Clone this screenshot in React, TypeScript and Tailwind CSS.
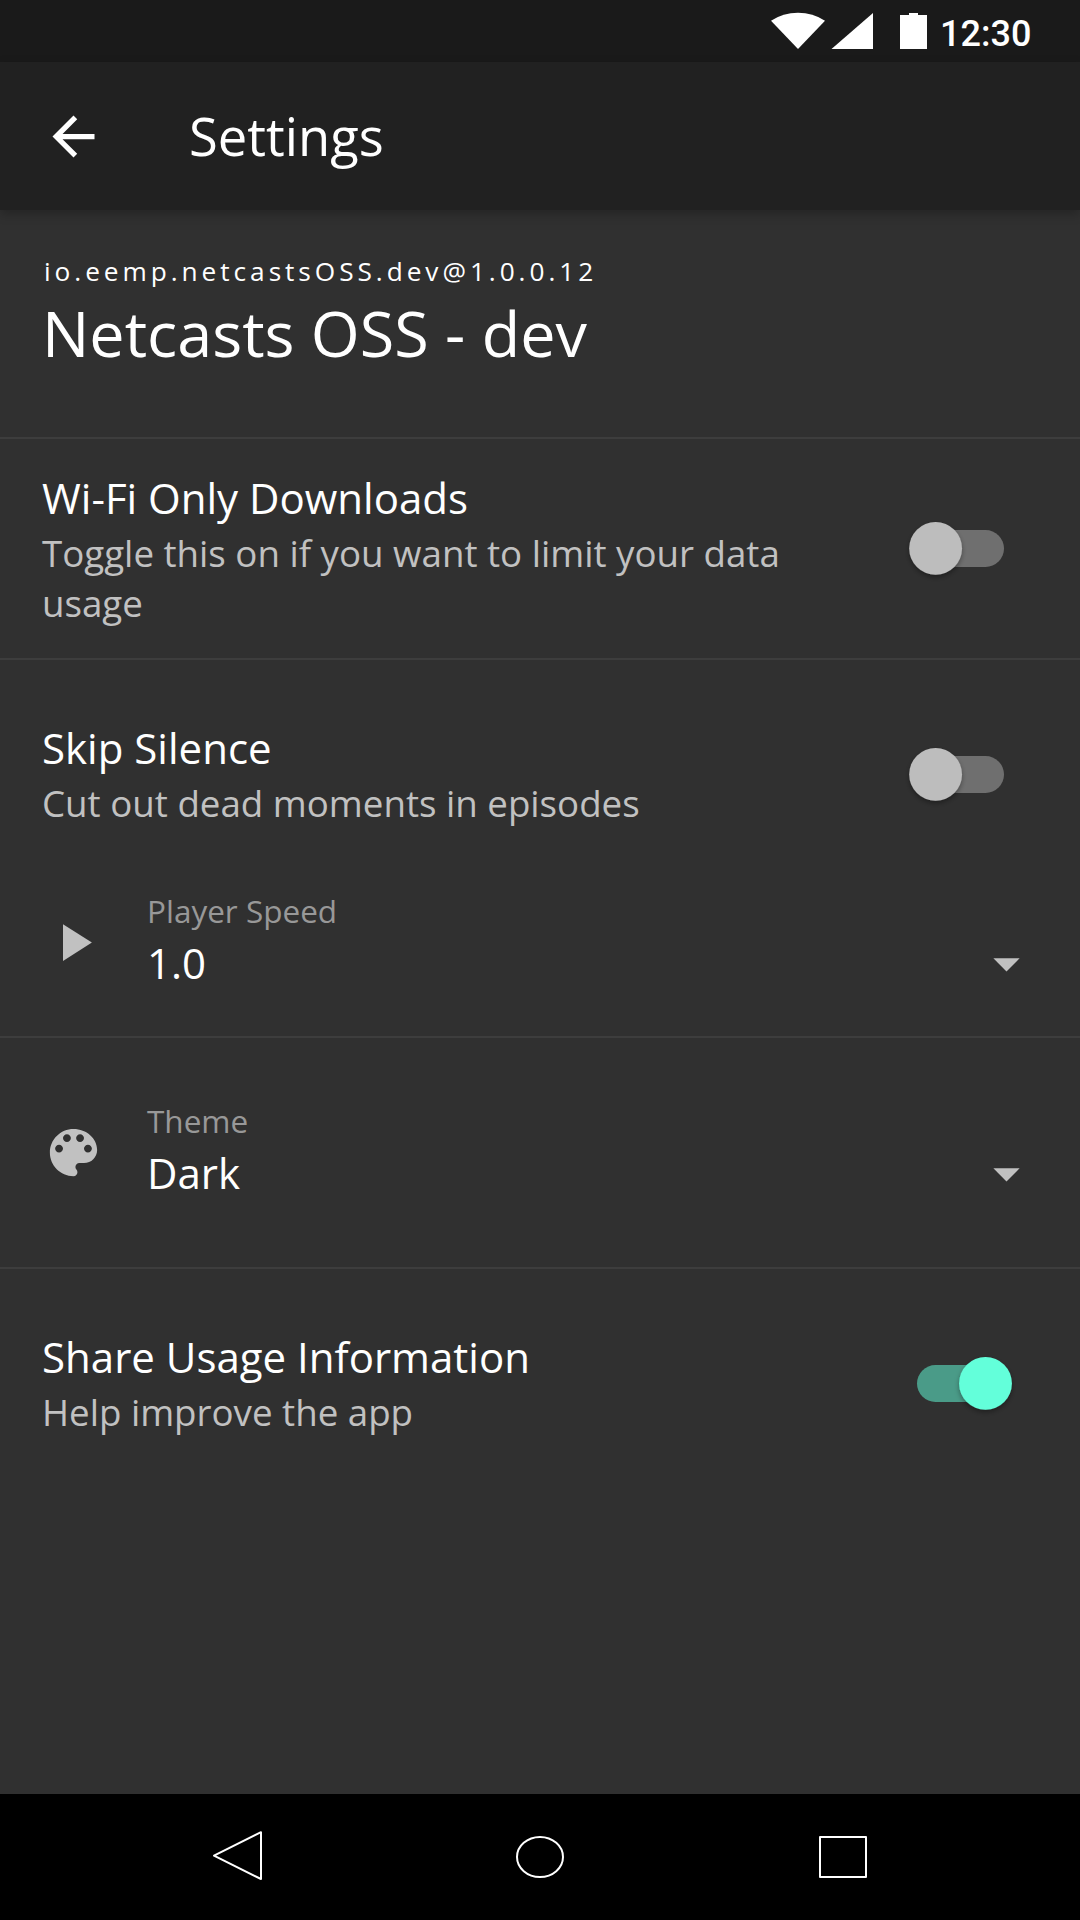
import React from "react";

function Toggle({ on = false }: { on?: boolean }) {
  return (
    <svg width="112" height="64" viewBox="0 0 112 64" className="shrink-0">
      <defs>
        <filter id="knob" x="-30%" y="-30%" width="160%" height="170%">
          <feDropShadow dx="0" dy="2.5" stdDeviation="2.5" floodColor="#000" floodOpacity="0.35" />
        </filter>
      </defs>
      <rect x={on ? 12 : 11} y="12" width="88" height="37" rx="18.5" fill={on ? "#4a9b88" : "#6f6f6f"} />
      <circle cx={on ? 80.5 : 30.6} cy="30.4" r="26.4" fill={on ? "#64ffda" : "#bdbdbd"} filter="url(#knob)" />
    </svg>
  );
}

function SwitchText({ title, text }: { title: string; text: string }) {
  return (
    <div className="w-[760px]">
      <div className="text-[42px] leading-[60px] text-white">{title}</div>
      <div className="text-[36.7px] leading-[50px] text-[#c1c1c1]">{text}</div>
    </div>
  );
}

function SelectRow({ icon, label, value }: { icon: React.ReactNode; label: string; value: string }) {
  return (
    <div className="flex items-start pl-[42px]">
      <div className="mt-[21px] h-[63px] w-[105px]">{icon}</div>
      <div className="flex-1">
        <div className="text-[31.5px] leading-[42px] text-[#989898]">{label}</div>
        <div className="mt-px text-[42px] leading-[60px] text-white">{value}</div>
      </div>
      <svg width="63" height="63" viewBox="0 0 24 24" fill="#c1c1c1" className="mt-[42px] mr-[42px]">
        <path d="M7 10l5 5 5-5z" />
      </svg>
    </div>
  );
}

export default function App() {
  return (
    <div className="flex h-[1920px] w-[1080px] flex-col overflow-hidden bg-[#303030] font-['Open_Sans',sans-serif] text-white">
      <div className="flex h-[62px] shrink-0 bg-[#1a1a1a] pl-[771px]">
        <svg width="160" height="62" viewBox="0 0 160 62" fill="#fff" className="shrink-0">
          <path d="M0 20.7Q12 12.7 27 12.7T54 20.7L27 49Z" />
          <path d="M60.5 49H102V13Z" />
          <path d="M129 15h9v-2h9v2h9v34h-27z" />
        </svg>
        <div className="ml-[9px] pt-[3px] font-['Roboto'] text-[36px] leading-[62px] font-medium">12:30</div>
      </div>
      <header className="z-10 flex h-[148px] shrink-0 items-center bg-[#212121] pl-[42px] shadow-[0_4px_10px_rgba(0,0,0,0.25)]">
        <svg width="63" height="63" viewBox="0 0 24 24" fill="#fff" className="mt-px">
          <path d="M20 11H7.83l5.59-5.59L12 4l-8 8 8 8 1.41-1.41L7.83 13H20v-2z" />
        </svg>
        <h1 className="ml-[84px] text-[52.5px] leading-[72px]">Settings</h1>
      </header>
      <section className="h-[229px] shrink-0 border-b-2 border-[#3d3d3d] px-[42px] pt-[41px]">
        <div className="pl-[2px] text-[26.25px] leading-[40px] tracking-[3.94px]">io.eemp.netcastsOSS.dev@1.0.0.12</div>
        <div className="text-[62.9px] leading-[84px]">Netcasts OSS - dev</div>
      </section>
      <section className="flex h-[221px] shrink-0 items-start justify-between border-b-2 border-[#3d3d3d] pt-[29px] pr-[63px] pl-[42px]">
        <SwitchText title="Wi-Fi Only Downloads" text="Toggle this on if you want to limit your data usage" />
        <div className="pt-[50px]"><Toggle /></div>
      </section>
      <section className="h-[378px] shrink-0 border-b-2 border-[#3d3d3d] pt-[58px]">
        <div className="flex items-start justify-between pr-[63px] pl-[42px]">
          <SwitchText title="Skip Silence" text="Cut out dead moments in episodes" />
          <div className="pt-[26px]"><Toggle /></div>
        </div>
        <div className="mt-[62px]">
          <SelectRow label="Player Speed" value="1.0" icon={<svg width="63" height="63" viewBox="0 0 24 24" fill="#c1c1c1"><path d="M8 5v14l11-7z" /></svg>} />
        </div>
      </section>
      <section className="h-[231px] shrink-0 border-b-2 border-[#3d3d3d] pt-[62px]">
        <SelectRow label="Theme" value="Dark" icon={<svg width="63" height="63" viewBox="0 0 24 24" fill="#c1c1c1"><path d="M12 3c-4.97 0-9 4.03-9 9s4.03 9 9 9c.83 0 1.5-.67 1.5-1.5 0-.39-.15-.74-.39-1.01-.23-.26-.38-.61-.38-.99 0-.83.67-1.5 1.5-1.5H16c2.76 0 5-2.24 5-5 0-4.42-4.03-8-9-8zm-5.5 9c-.83 0-1.5-.67-1.5-1.5S5.67 9 6.5 9 8 9.67 8 10.5 7.33 12 6.5 12zm3-4C8.67 8 8 7.33 8 6.5S8.67 5 9.5 5s1.5.67 1.5 1.5S10.33 8 9.5 8zm5 0c-.83 0-1.5-.67-1.5-1.5S13.67 5 14.5 5s1.5.67 1.5 1.5S15.33 8 14.5 8zm3 4c-.83 0-1.5-.67-1.5-1.5S16.67 9 17.5 9s1.5.67 1.5 1.5-.67 1.5-1.5 1.5z" /></svg>} />
      </section>
      <section className="flex flex-1 items-start justify-between pt-[58px] pr-[63px] pl-[42px]">
        <SwitchText title="Share Usage Information" text="Help improve the app" />
        <div className="pt-[26px]"><Toggle on /></div>
      </section>
      <nav className="flex h-[126px] shrink-0 items-center justify-center gap-[252px] bg-black">
        <svg width="52" height="52" viewBox="0 0 52 52" fill="none" stroke="#fff" strokeWidth="2" strokeLinejoin="round"><path d="M4 24.7L51 1.2V48Z" /></svg>
        <svg width="52" height="52" viewBox="0 0 52 52" fill="none" stroke="#fff" strokeWidth="2"><ellipse cx="26" cy="26" rx="23" ry="20" /></svg>
        <svg width="52" height="52" viewBox="0 0 52 52" fill="none" stroke="#fff" strokeWidth="2" strokeLinejoin="round"><rect x="2" y="6" width="46" height="40" /></svg>
      </nav>
    </div>
  );
}
